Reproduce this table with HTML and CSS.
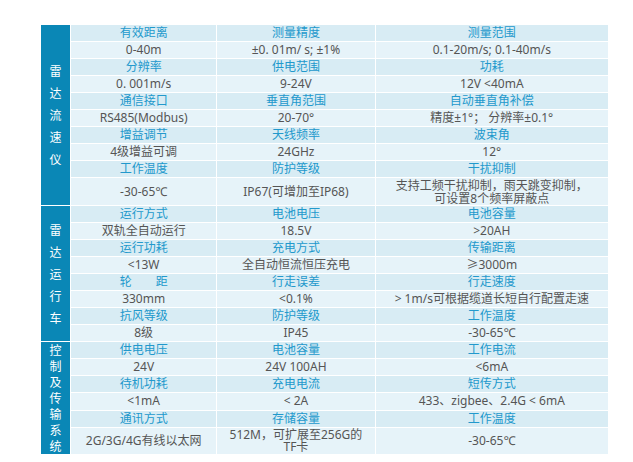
FILE: index.html
```html
<!DOCTYPE html>
<html lang="zh">
<head>
<meta charset="utf-8">
<title>参数表</title>
<link rel="stylesheet" href="styles.css">
</head>
<body>
<div class="frame">
<table class="spec">
  <colgroup>
    <col class="c0"><col class="c1"><col class="c2"><col class="c3">
  </colgroup>
  <tbody>
    <tr class="h">
      <th class="side s1" rowspan="10">雷<br>达<br>流<br>速<br>仪</th>
      <td>有效距离</td><td>测量精度</td><td>测量范围</td>
    </tr>
    <tr class="v"><td>0-40m</td><td>±0. 01m/ s; ±1%</td><td>0.1-20m/s; 0.1-40m/s</td></tr>
    <tr class="h"><td>分辨率</td><td>供电范围</td><td>功耗</td></tr>
    <tr class="v"><td>0. 001m/s</td><td>9-24V</td><td>12V &lt;40mA</td></tr>
    <tr class="h"><td>通信接口</td><td>垂直角范围</td><td>自动垂直角补偿</td></tr>
    <tr class="v"><td>RS485(Modbus)</td><td>20-70°</td><td>精度±1°； 分辨率±0.1°</td></tr>
    <tr class="h"><td>增益调节</td><td>天线频率</td><td>波束角</td></tr>
    <tr class="v"><td>4级增益可调</td><td>24GHz</td><td>12°</td></tr>
    <tr class="h"><td>工作温度</td><td>防护等级</td><td>干扰抑制</td></tr>
    <tr class="v dbl"><td>-30-65℃</td><td>IP67(可增加至IP68)</td><td class="two">支持工频干扰抑制，雨天跳变抑制，<br>可设置8个频率屏蔽点</td></tr>

    <tr class="h">
      <th class="side s2" rowspan="8">雷<br>达<br>运<br>行<br>车</th>
      <td>运行方式</td><td>电池电压</td><td>电池容量</td>
    </tr>
    <tr class="v"><td>双轨全自动运行</td><td>18.5V</td><td>&gt;20AH</td></tr>
    <tr class="h"><td>运行功耗</td><td>充电方式</td><td>传输距离</td></tr>
    <tr class="v"><td>&lt;13W</td><td>全自动恒流恒压充电</td><td>≥3000m</td></tr>
    <tr class="h"><td>轮　　距</td><td>行走误差</td><td>行走速度</td></tr>
    <tr class="v"><td>330mm</td><td>&lt;0.1%</td><td>&gt; 1m/s可根据缆道长短自行配置走速</td></tr>
    <tr class="h"><td>抗风等级</td><td>防护等级</td><td>工作温度</td></tr>
    <tr class="v"><td>8级</td><td>IP45</td><td>-30-65℃</td></tr>

    <tr class="h">
      <th class="side s3" rowspan="6">控<br>制<br>及<br>传<br>输<br>系<br>统</th>
      <td>供电电压</td><td>电池容量</td><td>工作电流</td>
    </tr>
    <tr class="v"><td>24V</td><td>24V 100AH</td><td>&lt;6mA</td></tr>
    <tr class="h"><td>待机功耗</td><td>充电电流</td><td>短传方式</td></tr>
    <tr class="v"><td>&lt;1mA</td><td>&lt; 2A</td><td>433、zigbee、2.4G &lt; 6mA</td></tr>
    <tr class="h"><td>通讯方式</td><td>存储容量</td><td>工作温度</td></tr>
    <tr class="v dbl"><td>2G/3G/4G有线以太网</td><td class="tight">512M，可扩展至256G的<br>TF卡</td><td>-30-65℃</td></tr>
  </tbody>
</table>
</div>
</body>
</html>
```
FILE: styles.css
```css
html, body {
  margin: 0;
  padding: 0;
  background: #ffffff;
}

body {
  font-family: "Noto Sans", "Noto Sans CJK SC", sans-serif;
  font-size: 12px;
}

.frame {
  padding: 24px 0 0 40px;
}

.spec {
  border-collapse: collapse;
  table-layout: fixed;
  width: 569px;
  border: 1px solid #f1f4f6;
}

.c0 { width: 30px; }
.c1 { width: 146px; }
.c2 { width: 158px; }
.c3 { width: 233px; }

.spec td,
.spec th {
  border: 1px solid #ffffff;
  padding: 0;
  text-align: center;
  vertical-align: middle;
  white-space: nowrap;
  height: 16px;
  line-height: 16px;
}

.spec tr.h td {
  background: #d8ecf4;
  color: #2299cc;
}

.spec tr.v td {
  background: #e6f3f9;
  color: #555555;
}

.spec tr.dbl td {
  height: 26px;
}

.spec td.two {
  line-height: 13px;
  padding-top: 1px;
}

.spec td.tight {
  line-height: 12px;
}

.spec th.side {
  background: #0a87b6;
  color: #ffffff;
  font-weight: normal;
  font-family: "Noto Sans CJK SC", sans-serif;
  font-size: 12px;
}

.spec th.s1,
.spec th.s2 {
  line-height: 22px;
}

.spec th.s3 {
  line-height: 16px;
}
```
